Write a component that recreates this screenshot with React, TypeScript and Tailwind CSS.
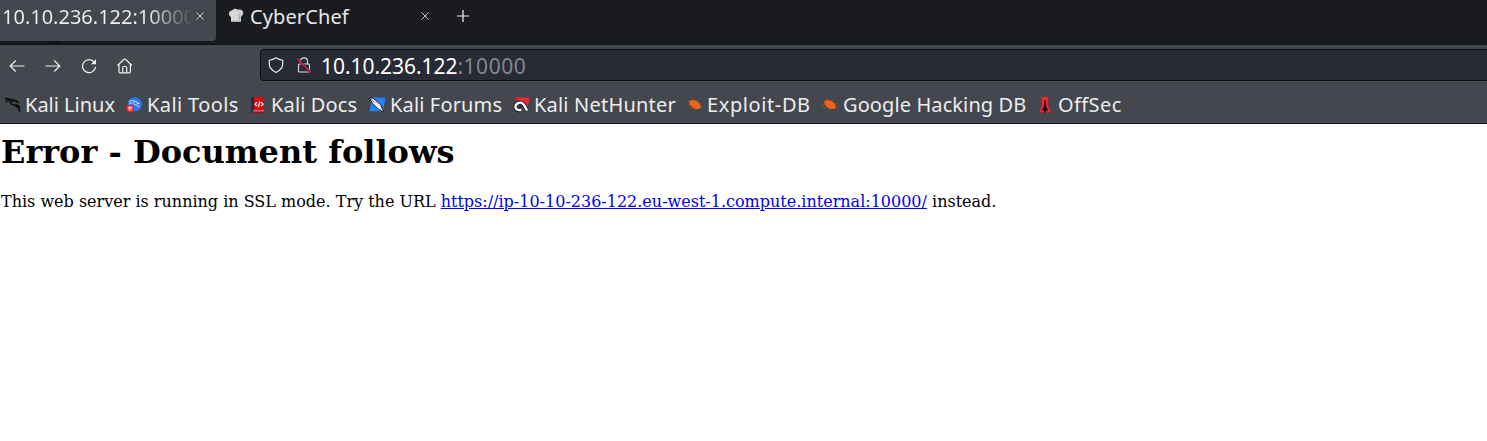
import React from "react";

function KaliDragon() {
  return (
    <svg viewBox="0 0 16 16" className="size-4 shrink-0" fill="none" stroke="#08090b" strokeLinecap="round">
      <path d="M.3 1.2 6 2 9 3.6M.5 2.8 5 2.4M1.2 4.8 5.5 3.2" strokeWidth="1.1" />
      <path d="M8.5 3.7C5 3.9 4.8 7 8.2 7.8c3.4.6 5.6 2.2 6.6 6.4" strokeWidth="1.5" />
      <path d="M8.6 3.2c2-.4 3.4.4 4.4 2.2l-2.2-.6M9.5 8c2.4-.5 4.6.8 5.3 2.6" strokeWidth="1.2" />
    </svg>
  );
}

function ToolsIcon() {
  return (
    <svg viewBox="0 0 16 16" className="size-4 shrink-0">
      <circle cx="8.7" cy="7.3" r="7.1" fill="#2878f5" />
      <path d="M3 4.4c3.5-1.3 5.6-.8 7 .3 1.7.4 2.5 1.2 3.3 2.1l-2.7-.4M9 5.2c-2.4.5-1.4 2.5.7 2.7 1.7.2 3 1.1 3.5 2.6M3 7l3.5-1.5" fill="none" stroke="#cfe3ff" strokeWidth="1" />
      <circle cx="4" cy="11.5" r="3.8" fill="#eb242d" />
      <path d="M1.8 10.2h4.4M3.2 10.2v3.3M5 10.2v3.3" stroke="#fff" strokeWidth=".9" />
    </svg>
  );
}

function DocsIcon() {
  return (
    <svg viewBox="0 0 16 16" className="size-4 shrink-0">
      <path d="M2 0h12v15.5H2z" fill="#d80d13" />
      <path d="M1.5 0H4v15.5H1.5z" fill="#202846" />
      <path d="M4 14.2h10v1.3H4z" fill="#96060c" />
      <path d="M3 13.9h11" stroke="#f5d9d9" strokeWidth=".7" />
      <path d="m7 5.2-2 2 2 2m4-4 2 2-2 2M9.7 4.6 8.4 9.8" fill="none" stroke="#fff" strokeWidth="1.15" />
    </svg>
  );
}

function ForumsIcon() {
  return (
    <svg viewBox="0 0 16 16" className="size-4 shrink-0">
      <path d="M3 .5h13.5L14 14.3H.5z" fill="#2582fa" />
      <path d="m0 .5 4 .7 7.5 6.3 3.5 7.9-6-3.7L4 7z" fill="#f4f4f4" stroke="#171b22" strokeWidth=".9" />
      <path d="m1 .8 5 5m6 3 2 4" stroke="#30343a" strokeWidth=".7" />
    </svg>
  );
}

function NetHunterIcon() {
  return (
    <svg viewBox="0 0 16 16" className="size-4 shrink-0" fill="none">
      <path d="M3 .5h13.5L14 14 8 8z" fill="#ed2932" />
      <path d="m0 .8 5 3" stroke="#c61c29" strokeWidth="1.3" />
      <path d="M8.2 13.4C4.5 14 2.4 12.5 2.4 9.8c0-3.7 4.9-5.6 7.7-3.3 2.1 1.9 2.4 4.6 4.1 7" stroke="#202229" strokeWidth="4" />
      <path d="M8.2 13C4.5 13.6 2.4 12.2 2.4 9.8c0-3.4 4.9-5.4 7.7-3 2.1 1.9 2 4.4 4.1 6.6" stroke="#fff" strokeWidth="2.3" />
      <path d="m6 10 3.5-1" stroke="#202229" strokeWidth="1.4" />
    </svg>
  );
}

function BugIcon() {
  return (
    <svg viewBox="0 0 16 16" className="size-4 shrink-0">
      <path d="M2.2 4.3c3.2-2.2 7-1.4 9.4 1.4 2.4 2.1 2.5 4.3 1.3 5.5-2.6 1.7-6 .8-8-1.4C3.2 8.9 2.1 6.7 2.2 4.3z" fill="#ef6311" />
      <path d="M3.3 5.8 1 3.5m2.1 4L.2 8.4M6 9l-3 2.5m6-.5-2 2M6.5 3.8 4.8 1.4m5 3.2 1.4-2m.6 4.6 3-.5m-1.8 3 2.6 1" stroke="#c85716" strokeWidth=".7" />
    </svg>
  );
}

function OffSecIcon() {
  return (
    <svg viewBox="0 0 16 16" className="size-4 shrink-0">
      <path d="M5 0h6.2v9l3 6.5H2L5 9z" fill="#ec252b" />
      <path d="M7.5 3.5h1.2l.5 6 2 4.3-2-.4v2.1H7v-2.1l-2.2.4L7 9.5z" fill="#250e14" />
    </svg>
  );
}

function ChefIcon() {
  return (
    <svg viewBox="0 0 16 16" className="size-4 shrink-0">
      <path d="M3 14V9C-.3 7.3.5 2.2 4 2.4 5.4.3 8.4.3 9.6 1.7c3.8-1.4 7.2 2.2 5 5.3L13 9v5z" fill="#d0d0d0" />
      <path d="M4 3.5v8.8M7.3 3v9" stroke="#e6e6e6" />
      <path d="M3 13.4h10M11.8 6l-.3 6" stroke="#a5a5a5" />
    </svg>
  );
}

function Close() {
  return (
    <svg viewBox="0 0 8 8" className="size-2 shrink-0" stroke="#e0e0e2" fill="none">
      <path d="m.4.4 7.2 7.2m0-7.2L.4 7.6" strokeWidth=".9" />
    </svg>
  );
}

function Nav() {
  return (
    <div className="flex w-[260px] shrink-0 items-center gap-5 pb-1 pl-[9px] text-[#efeff1]">
      <svg viewBox="0 0 16 16" className="size-4" fill="none" stroke="currentColor" strokeWidth="1.2" strokeLinecap="round"><path d="M1.5 8H15M6.5 2.8 1.2 8l5.3 5.2" /></svg>
      <svg viewBox="0 0 16 16" className="size-4" fill="none" stroke="currentColor" strokeWidth="1.2" strokeLinecap="round"><path d="M1 8h13.5M9.5 2.8 14.8 8l-5.3 5.2" /></svg>
      <svg viewBox="0 0 16 16" className="size-4" fill="none" stroke="currentColor" strokeWidth="1.2"><path d="M13.4 4.5a6.5 6.5 0 1 0 1.1 4.4" /><path d="M15 1.2v5.1H9.9z" fill="currentColor" stroke="none" /></svg>
      <svg viewBox="0 0 16 16" className="size-4" fill="none" stroke="currentColor" strokeWidth="1.2" strokeLinejoin="round"><path d="M.5 7.5 7 1.3q.7-.6 1.4 0l6.5 6.2M2 6.5v7.3q0 1 1 1h9.4q1 0 1-1V6.5M5.7 14.5V9.8q0-1.3 1.3-1.3h1.4q1.3 0 1.3 1.3v4.7" /></svg>
    </div>
  );
}

const bookmarks = [
  { label: "Kali Linux", Icon: KaliDragon, width: "w-[121px]", text: "" },
  { label: "Kali Tools", Icon: ToolsIcon, width: "w-[124px]", text: "ml-px tracking-[0.4px]" },
  { label: "Kali Docs", Icon: DocsIcon, width: "w-[119px]", text: "ml-px tracking-[0.15px]" },
  { label: "Kali Forums", Icon: ForumsIcon, width: "w-[144px]", text: "ml-px tracking-[0.15px]" },
  { label: "Kali NetHunter", Icon: NetHunterIcon, width: "w-[174px]", text: "ml-px tracking-[0.2px]" },
  { label: "Exploit-DB", Icon: BugIcon, width: "w-[135px]", text: "tracking-[0.6px]" },
  { label: "Google Hacking DB", Icon: BugIcon, width: "w-[215px]", text: "ml-px tracking-[0.1px]" },
  { label: "OffSec", Icon: OffSecIcon, width: "w-[100px]", text: "ml-px tracking-[0.4px]" },
];

export default function App() {
  return (
    <div className="flex h-[441px] w-full flex-col overflow-hidden bg-white font-['Noto_Sans',sans-serif]">
      <div className="flex h-[45px] shrink-0 items-start border-b border-[#101115] bg-[#1a1b1f] text-xl text-[#e8e8e9]">
        <div className="w-[216px] shrink-0">
          <div className="flex h-[41px] items-start rounded-br-[4px] bg-[#45474e] pl-0.5 text-[#f1f1f2]">
            <div className="mr-0.5 h-[34px] w-48 shrink-0 overflow-hidden whitespace-nowrap bg-linear-to-r from-[#f1f1f2] from-75% to-[#45474e] bg-clip-text leading-[34px] text-transparent">10.10.236.122:10000</div>
            <div className="pt-3"><Close /></div>
          </div>
          <div className="ml-[49px] h-[3px] w-3 bg-[#121317]" />
        </div>
        <div className="flex h-8 w-[205px] shrink-0 items-center pl-3">
          <ChefIcon /><span className="ml-1.5 pt-0.5 tracking-[0.1px] whitespace-nowrap">CyberChef</span>
        </div>
        <div className="pt-3"><Close /></div>
        <svg viewBox="0 0 12 12" className="mt-2.5 ml-7 size-3" stroke="#f0f0f1"><path d="M6 0v12M0 6h12" strokeWidth="1.2" /></svg>
      </div>
      <div className="flex h-[41px] shrink-0 bg-[#45474e] pt-1">
        <Nav />
        <div className="flex h-8 grow items-center rounded-l-[4px] border border-r-0 border-[#0d0f14] bg-[#282a36] pl-[7px]">
          <svg viewBox="0 0 16 16" className="size-4" fill="none" stroke="#eeeef0" strokeWidth="1.15" strokeLinejoin="round"><path d="M8 .8c2 1.4 4.3 2.2 6.7 2.4V7c0 4-2.5 6.5-6.7 8.4C3.8 13.5 1.3 11 1.3 7V3.2C3.7 3 6 2.2 8 .8z" /></svg>
          <svg viewBox="0 0 16 16" className="ml-3 size-4" fill="none"><path d="M4.5 7V4.4a3.5 3.5 0 0 1 7 0V7M3.5 7h9q1 0 1 1v6q0 1-1 1h-9q-1 0-1-1V8q0-1 1-1z" stroke="#dedee1" strokeWidth="1.1" /><path d="m1.2 1.5 13.5 14" stroke="#282a36" strokeWidth="2.5" /><path d="m1.2 1.5 13.5 14" stroke="#e9174d" strokeWidth="1.4" /></svg>
          <span className="ml-[9px] pt-[3px] text-[21px] whitespace-nowrap text-white"><span className="tracking-[-0.04px]">10.10.236.122</span><span className="tracking-[0.5px] text-[#85868e]">:10000</span></span>
        </div>
      </div>
      <div className="flex h-[38px] shrink-0 items-center border-b border-[#100e18] bg-[#45474e] pl-[5px] text-xl text-[#ededee]">
        {bookmarks.map(({ label, Icon, width, text }) => (
          <div key={label} className={`flex shrink-0 items-center gap-1 ${width}`}>
            <Icon /><span className={`whitespace-nowrap ${text}`}>{label}</span>
          </div>
        ))}
      </div>
      <main className="grow bg-white pl-px font-['DejaVu_Serif',serif] text-base text-black">
        <h1 className="pt-[9px] text-[32px] leading-[38px] font-bold">Error - Document follows</h1>
        <p className="mt-[21px] leading-[19px]">This web server is running in SSL mode. Try the URL <a href="#" className="text-[#0000ee] underline">https://ip-10-10-236-122.eu-west-1.compute.internal:10000/</a> instead.</p>
      </main>
    </div>
  );
}
